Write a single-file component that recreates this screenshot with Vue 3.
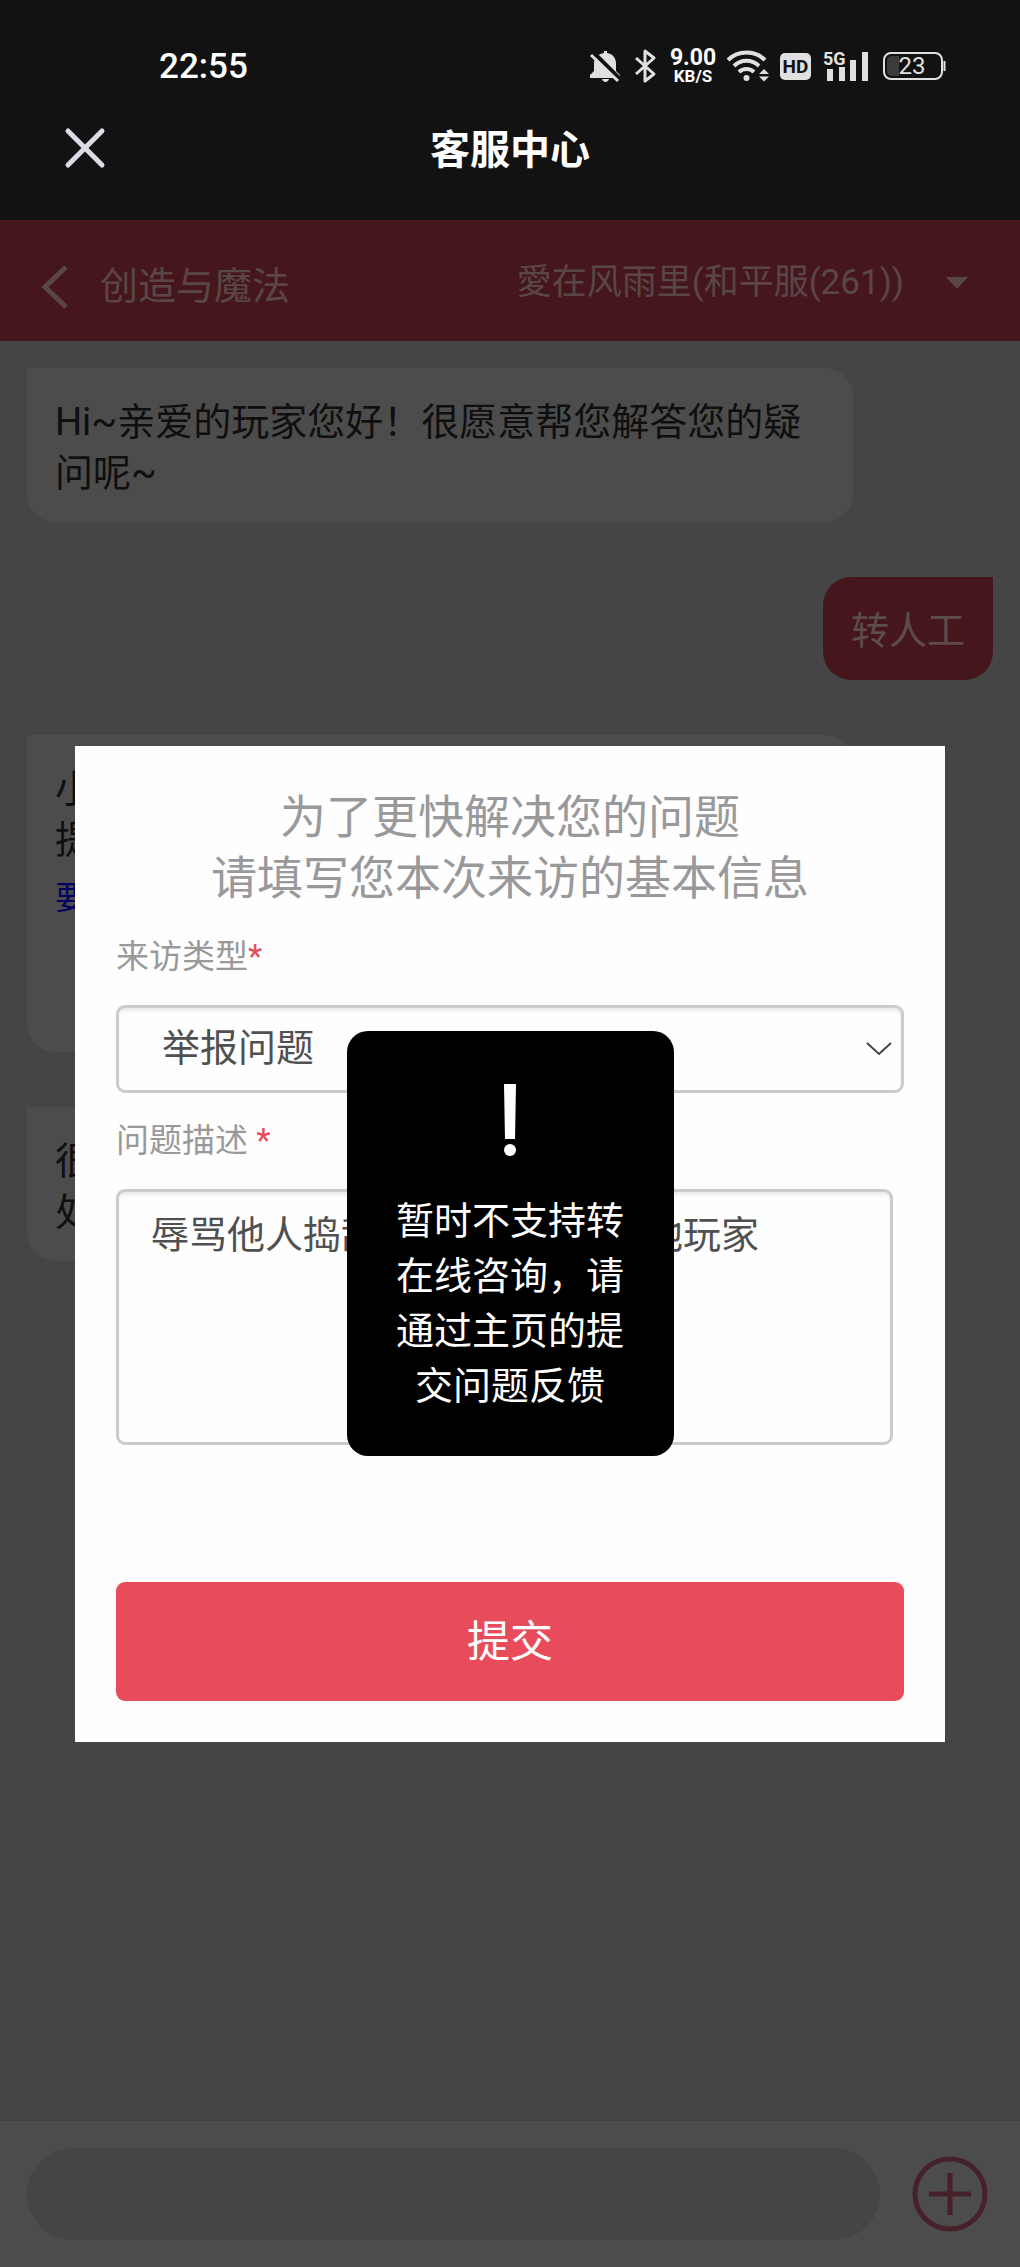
<script setup>
import { ref } from 'vue'

const visitType = ref('report')
const description = ref('辱骂他人捣乱游戏秩序影响其他玩家')
const draft = ref('')
</script>

<template>
  <div class="app">
    <div class="top">
      <div class="status">
        <span class="time">22:55</span>
        <div class="status-icons">
          <svg width="33" height="34" viewBox="0 0 33 34" aria-hidden="true">
            <path d="M15 2h3v2c6 1 9 5 9 11v7l4 4v3H1v-3l4-4v-7C5 9 9 5 15 4z" fill="#e0e0e0" />
            <path d="M13 30h7c-1 4-6 4-7 0z" fill="#e0e0e0" />
            <path d="M4 3l28 28" stroke="#121212" stroke-width="4" />
            <path d="M2 6l27 26" stroke="#e0e0e0" stroke-width="3" />
          </svg>
          <svg width="24" height="34" viewBox="0 0 24 34" aria-hidden="true">
            <path d="M2 9l18 16-9 7V2l9 7L2 25" fill="none" stroke="#e0e0e0" stroke-width="3" stroke-linejoin="round" />
          </svg>
          <div class="speed"><span class="rate">9.00</span><span class="unit">KB/S</span></div>
          <svg width="40" height="34" viewBox="0 0 40 34" aria-hidden="true">
            <g fill="none" stroke="#e0e0e0" stroke-width="4">
              <path d="M0 11C10 1 27 1 37 11" />
              <path d="M6 17c7-7 18-7 25 0" />
              <path d="M11 23c4-4 11-4 15 0" />
            </g>
            <circle cx="18.500" cy="29" r="3" fill="#e0e0e0" />
            <path d="M31 25l5-5 5 5zM31 27.500l5 5 5-5z" fill="#e0e0e0" />
          </svg>
          <span class="hd">HD</span>
          <svg width="46" height="34" viewBox="0 0 46 34" aria-hidden="true">
            <path d="M4 20h6v12H4zM16 18h6v14h-6zM27 11h6v21h-6zM39 3h6v29h-6z" fill="#e0e0e0" />
            <text x="0" y="16" class="net">5G</text>
          </svg>
          <svg width="65" height="34" viewBox="0 0 65 34" aria-hidden="true">
            <rect x="3" y="4" width="58" height="26" rx="7" fill="none" stroke="#e0e0e0" stroke-width="2" />
            <path d="M11 7h7v20h-7q-5 0-5-5V12q0-5 5-5z" fill="#3c3c3c" />
            <path d="M62.500 12h2v10h-2z" fill="#e0e0e0" />
            <text x="31" y="25" text-anchor="middle" class="charge">23</text>
          </svg>
        </div>
      </div>
      <div class="nav">
        <button class="icon-btn" aria-label="关闭">
          <svg width="42" height="42" viewBox="0 0 42 42">
            <path d="M4 4l34 34M38 4L4 38" stroke="#dcdce4" stroke-width="5" stroke-linecap="round" />
          </svg>
        </button>
        <h1>客服中心</h1>
      </div>
    </div>

    <div class="stage">
      <header class="bar">
        <button class="icon-btn" aria-label="返回">
          <svg width="28" height="46" viewBox="0 0 28 46">
            <path d="M25 3L4 23l21 20" fill="none" stroke="#5a4645" stroke-width="5" />
          </svg>
        </button>
        <h2>创造与魔法</h2>
        <button class="role">
          <span>愛在风雨里(和平服(261))</span>
          <svg width="22" height="12" viewBox="0 0 22 12"><path d="M0 0h22L11 12z" fill="#5a4645" /></svg>
        </button>
      </header>

      <main class="chat">
        <div class="msg bot">Hi~亲爱的玩家您好！很愿意帮您解答您的疑问呢~</div>
        <div class="msg user">转人工</div>
        <div class="msg bot tall">小<br />提<br /><a href="#">要</a></div>
        <div class="msg bot">很<br />处</div>
      </main>

      <footer class="composer">
        <input v-model="draft" type="text" aria-label="输入消息" />
        <button class="icon-btn" aria-label="更多">
          <svg width="78" height="78" viewBox="0 0 78 78">
            <circle cx="39" cy="39" r="35" fill="none" stroke="#47212a" stroke-width="5" />
            <path d="M39 18v42M18 39h42" stroke="#47212a" stroke-width="5" />
          </svg>
        </button>
      </footer>

      <div class="overlay">
        <form class="dialog" @submit.prevent>
          <p class="lead">为了更快解决您的问题<br />请填写您本次来访的基本信息</p>
          <label for="type">来访类型<em>*</em></label>
          <div class="select">
            <select id="type" v-model="visitType">
              <option value="report">举报问题</option>
            </select>
            <svg width="26" height="14" viewBox="0 0 26 14" aria-hidden="true">
              <path d="M1 1l12 11L25 1" fill="none" stroke="#444" stroke-width="2" />
            </svg>
          </div>
          <label for="desc">问题描述 <em>*</em></label>
          <textarea id="desc" v-model="description"></textarea>
          <button class="submit">提交</button>
        </form>

        <div class="toast" role="alert">
          <svg width="14" height="72" viewBox="0 0 14 72" aria-hidden="true">
            <path d="M1 0h12l-1 55H2z" fill="#fff" />
            <circle cx="7" cy="66" r="6" fill="#fff" />
          </svg>
          <p>暂时不支持转在线咨询，请通过主页的提交问题反馈</p>
        </div>
      </div>
    </div>
  </div>
</template>

<style>
body {
  background: #454545;
}
</style>

<style scoped>
.app {
  display: flex;
  flex-direction: column;
  min-height: 100vh;
  font-family: Roboto, 'Noto Sans CJK SC', sans-serif;
  font-size: 38px;
  line-height: 51px;
}
.app * {
  box-sizing: border-box;
}
h1,
h2,
p {
  margin: 0;
  font-weight: 400;
}
svg {
  display: block;
  flex: none;
  overflow: visible;
}
button,
input,
select,
textarea {
  margin: 0;
  border: 0;
  font: inherit;
}
.icon-btn {
  padding: 0;
  background: none;
}

.top {
  padding: 28px 0;
  background: #121212;
  color: #fff;
}
.status {
  display: flex;
  align-items: center;
  justify-content: space-between;
  height: 76px;
  padding: 0 74px 0 159px;
}
.time {
  font-size: 35px;
  font-weight: 500;
}
.status-icons {
  display: flex;
  align-items: center;
  gap: 12px;
}
.speed {
  display: flex;
  flex-direction: column;
  align-items: center;
  width: 46px;
  font-weight: 700;
}
.rate {
  font-size: 23px;
  line-height: 20px;
}
.unit {
  font-size: 17px;
  line-height: 16px;
}
.hd {
  width: 31px;
  border-radius: 5px;
  background: #e0e0e0;
  color: #121212;
  font-size: 19px;
  font-weight: 700;
  line-height: 27px;
  text-align: center;
}
.net {
  fill: #e0e0e0;
  font-size: 18px;
  font-weight: 700;
}
.charge {
  fill: #e0e0e0;
  font-size: 24px;
}
.nav {
  display: grid;
  grid-template-columns: 64px 1fr 64px;
  align-items: center;
  height: 88px;
  padding: 0 64px;
}
.nav h1 {
  padding-top: 4px;
  font-size: 40px;
  font-weight: 700;
  text-align: center;
}

.stage {
  position: relative;
  display: flex;
  flex: 1;
  flex-direction: column;
}
.bar {
  display: flex;
  align-items: center;
  height: 121px;
  padding: 12px 52px 0 41px;
  background: #46161d;
  color: #5a4645;
}
.bar h2 {
  flex: 1;
  padding-left: 31px;
  font-size: 38px;
}
.role {
  display: flex;
  align-items: center;
  gap: 42px;
  padding: 0 0 8px;
  background: none;
  color: inherit;
  font-size: 35px;
}

.chat {
  display: flex;
  flex: 1;
  flex-direction: column;
  align-items: flex-start;
  gap: 55px;
  padding: 27px;
  background: #454545;
}
.msg {
  padding: 29px 28px 23px;
  border-radius: 28px;
}
.bot {
  width: calc(100% - 140px);
  border-top-left-radius: 0;
  background: #4c4c4c;
  color: #0f0f0f;
}
.tall {
  min-height: 317px;
}
.tall a {
  color: #000060;
  font-size: 32px;
  line-height: 64px;
  text-decoration: none;
}
.user {
  align-self: flex-end;
  border-top-right-radius: 0;
  background: #46161d;
  color: #5e4c4b;
}

.composer {
  display: flex;
  align-items: center;
  gap: 31px;
  padding: 27px 31px 27px 27px;
  border-top: 1px solid #404040;
  background: #4c4c4c;
}
.composer input {
  flex: 1;
  min-width: 0;
  height: 92px;
  padding: 0 40px;
  border-radius: 46px;
  background: #454545;
}

.overlay {
  position: absolute;
  inset: 0;
  display: grid;
  place-items: center;
}
.dialog {
  display: flex;
  flex-direction: column;
  grid-area: 1 / 1;
  width: calc(100% - 150px);
  padding: 41px;
  background: #fefefe;
}
.lead {
  color: #99999b;
  font-size: 46px;
  line-height: 61px;
  text-align: center;
}
label {
  margin: 24px 0;
  color: #999;
  font-size: 33px;
  line-height: 48px;
}
label em {
  color: #e84c5a;
  font-style: normal;
}
.select {
  display: grid;
  align-items: center;
}
.select > * {
  grid-area: 1 / 1;
}
.select svg {
  justify-self: end;
  margin-right: 12px;
  pointer-events: none;
}
select,
textarea {
  border: 3px solid #ccc;
  border-radius: 9px;
  background: #fefefe;
  box-shadow: inset 0 4px 4px -2px #e4e4e4;
  color: #505050;
}
select {
  width: 100%;
  height: 88px;
  padding: 0 43px;
  appearance: none;
}
textarea {
  height: 256px;
  margin-right: 11px;
  padding: 18px 32px;
  resize: none;
}
.submit {
  height: 119px;
  margin-top: 137px;
  padding: 2px 0 0;
  border-radius: 9px;
  background: #e84c5a;
  color: #fff;
  font-size: 43px;
}
.toast {
  display: flex;
  flex-direction: column;
  grid-area: 1 / 1;
  align-items: center;
  gap: 38px;
  z-index: 1;
  width: 327px;
  padding: 53px 48px 42px;
  border-radius: 21px;
  background: #000;
  color: #fff;
  line-height: 55px;
  text-align: center;
}
</style>
